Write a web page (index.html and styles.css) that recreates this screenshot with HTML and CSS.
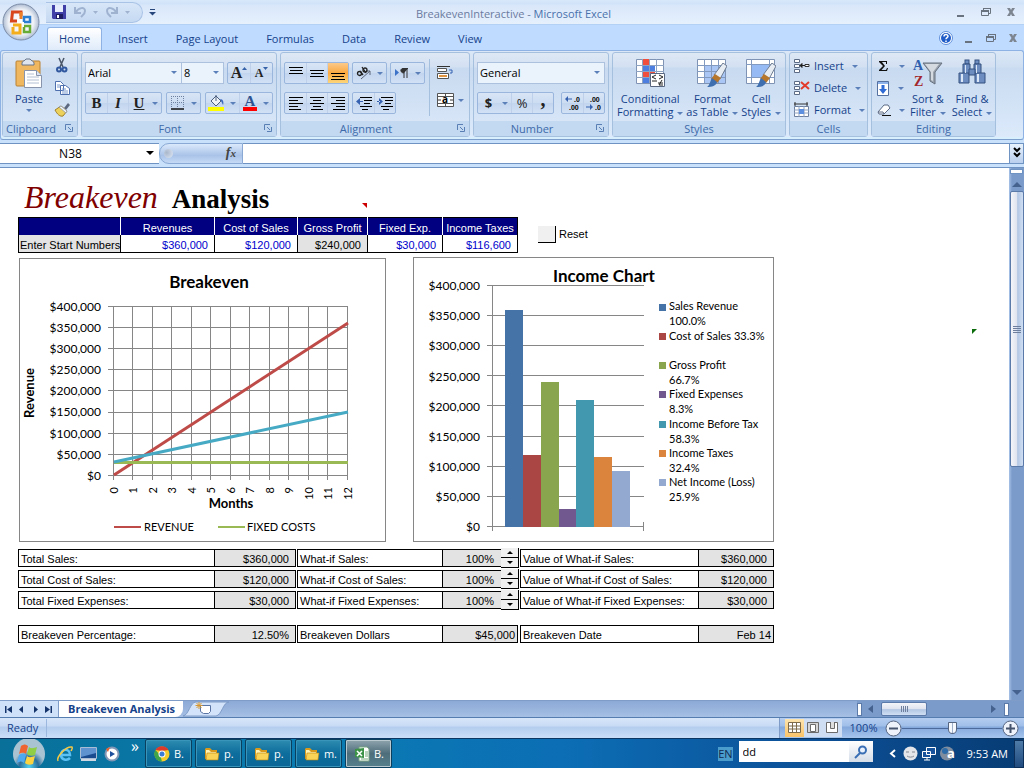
FILE: index.html
```html
<!DOCTYPE html>
<html lang="en">
<head>
<meta charset="utf-8">
<title>BreakevenInteractive - Microsoft Excel</title>
<link rel="stylesheet" href="styles.css">
</head>
<body>

<!-- shared icons -->
<svg class="defs" width="0" height="0">
	<symbol id="min" viewBox="0 0 12 12"><path d="M2 9h7v2H2z" fill="#69727f"/></symbol>
	<symbol id="restore" viewBox="0 0 12 12"><path d="M3.500 4V2.500h7v5H9M1.500 4.500h7v5h-7z" fill="none" stroke="#69727f"/><path d="M1 4h8v2H1zM3 2h8v1H3z" fill="#69727f"/></symbol>
	<symbol id="close" viewBox="0 0 12 12"><path d="M2 2h3l1 2 1-2h3L7.500 6 10 10H7L6 8l-1 2H2l2.500-4z" fill="#7d8591"/></symbol>
	<symbol id="launch" viewBox="0 0 8 8"><path d="M.5 6V.5H6" fill="none" stroke="#5a7fb4"/><path d="M3 3l3 3M7.500 3v4.500H3" fill="none" stroke="#5a7fb4"/></symbol>
	<symbol id="folder" viewBox="0 0 16 16"><path d="M1 3l1-1h4l2 2h5v9H1z" fill="#d99a1c"/><path d="M2 4h3l2 2h5v6H2z" fill="#fff2b0"/><path d="M3 7h12l-1 7H2z" fill="#f9d456" stroke="#b98212" stroke-width=".6"/></symbol>
	<symbol id="brush" viewBox="0 0 20 24"><path d="M16 0l4 3-7 13-6-4z" fill="#e8edf4" stroke="#6d7b91"/><path d="M8 11l6 4-4 5-6-4z" fill="#b6762c"/><path d="M5 15l5 4c-1 4-5 5-10 5 3-2 3-6 5-9z" fill="#3f6fae"/></symbol>
	<symbol id="insrow" viewBox="0 0 17 14"><path d="M1.500.5h5v3h-5zM1.500 5.500h5v3h-5zM1.500 10.500h5v3h-5z" fill="#fff" stroke="#5b6b85"/></symbol>
</svg>

<header class="top">
	<div class="titlebar">
		<div class="quick">
			<button title="Save"><svg width="14" height="14" viewBox="0 0 14 14"><path d="M0 0h14v14H1l-1-1z" fill="#403fa8"/><path d="M3 0h8v7H3z" fill="#e6ecfb"/><path d="M4 9h7v5H4z" fill="#1d1c62"/><path d="M5 10h2v3H5z" fill="#fff"/></svg></button>
			<button title="Undo"><svg width="24" height="14" viewBox="0 0 24 14"><path d="M1 2v6h6M2 7c2-4 9-6 9-1 0 3-2 4-4 6" fill="none" stroke="#9fb3d1" stroke-width="2"/><path d="M19 6h5l-2.500 3z" fill="#9fb3d1"/></svg></button>
			<button title="Redo"><svg width="24" height="14" viewBox="0 0 24 14"><path d="M11 2v6H5M10 7C8 3 1 1 1 6c0 3 2 4 4 6" fill="none" stroke="#9fb3d1" stroke-width="2"/><path d="M19 6h5l-2.500 3z" fill="#9fb3d1"/></svg></button>
		</div>
		<button class="more" title="Customize Quick Access Toolbar"><svg width="7" height="8" viewBox="0 0 7 8"><path d="M1 1.500h5" stroke="#27477c"/><path d="M0 4h7L3.500 7.500z" fill="#27477c"/></svg></button>
		<h1><span>BreakevenInteractive -</span> Microsoft Excel</h1>
		<div class="winbtns">
			<button title="Minimize"><svg width="12" height="12"><use href="#min"/></svg></button>
			<button title="Restore"><svg width="12" height="12"><use href="#restore"/></svg></button>
			<button title="Close"><svg width="12" height="12"><use href="#close"/></svg></button>
		</div>
	</div>

	<button class="office" title="Office Button">
		<svg width="38" height="38" viewBox="0 0 38 38">
			<defs><radialGradient id="orb"><stop offset="0" stop-color="#fff"/><stop offset=".7" stop-color="#eef1f6"/><stop offset="1" stop-color="#aebdd3"/></radialGradient></defs>
			<circle cx="19" cy="19" r="18" fill="url(#orb)" stroke="#7d8da8"/>
			<g fill="none" stroke-width="3">
				<path d="M15 18H9.500l1-9H19v4" stroke="#d8441c"/>
				<path d="M19 9v7" stroke="#ef7f25"/>
				<path d="M22 19v-5h6v5h-6" stroke="#2c7ed0" stroke-width="2.500"/>
				<path d="M11 22h7v8h-7v-6" stroke="#f4ae1c"/>
				<path d="M22 23h6v6h-6v-5" stroke="#67ac35" stroke-width="2.500"/>
			</g>
		</svg>
	</button>

	<nav class="tabs">
		<a href="#" class="on">Home</a>
		<a href="#">Insert</a>
		<a href="#">Page Layout</a>
		<a href="#">Formulas</a>
		<a href="#">Data</a>
		<a href="#">Review</a>
		<a href="#">View</a>
		<div class="winbtns">
			<button title="Help"><svg width="14" height="14" viewBox="0 0 14 14"><circle cx="7" cy="7" r="6.500" fill="#fff" stroke="#5f8fdc"/><circle cx="7" cy="7" r="5" fill="#1f5cc8"/><path d="M5 5.500C5 3 9 3 9 5.300 9 6.700 7 6.600 7 8.300M7 9.500v1.500" fill="none" stroke="#fff" stroke-width="1.500"/></svg></button>
			<button title="Minimize"><svg width="12" height="12"><use href="#min"/></svg></button>
			<button title="Restore"><svg width="12" height="12"><use href="#restore"/></svg></button>
			<button title="Close"><svg width="12" height="12"><use href="#close"/></svg></button>
		</div>
	</nav>
</header>

<div class="ribbon">
	<section class="group clip">
		<div class="body">
			<button class="big paste">
				<svg width="28" height="32" viewBox="0 0 28 32"><rect x="1" y="3" width="24" height="25" rx="1" fill="#efb75f" stroke="#b98234"/><path d="M7 5c0-2 3-2 4-4h4c1 2 4 2 4 4v2H7z" fill="#dfe5ee" stroke="#67748a"/><path d="M9.500 12.500h12l5 5v12h-17z" fill="#fff" stroke="#8794ab"/><path d="M21.500 12.500v5h5" fill="#dde5f0" stroke="#8794ab"/><path d="M12 16h7M12 19h12M12 22h12M12 25h12" stroke="#b4c0d4"/></svg>
				Paste<i class="dd"></i>
			</button>
			<div class="stack">
				<button title="Cut"><svg width="12" height="15" viewBox="0 0 12 15"><path d="M3 0l4 9M8 0L4 9" stroke="#4a5568" stroke-width="1.500"/><circle cx="3" cy="11.500" r="2" fill="none" stroke="#31589f" stroke-width="2"/><circle cx="8.500" cy="11.500" r="2" fill="none" stroke="#31589f" stroke-width="2"/></svg></button>
				<button title="Copy"><svg width="15" height="14" viewBox="0 0 15 14"><path d="M.5.5h5l3 3v6h-8zM5.500 4.500h5l4 3v6h-9z" fill="#fff" stroke="#4d6fae"/><path d="M2 4h3M2 6h3M7 8h4M7 10h6M7 12h6" stroke="#7b9ad0"/></svg></button>
				<button title="Format Painter"><svg width="16" height="14" viewBox="0 0 16 14"><path d="M10 5l4-5 2 2-4 5z" fill="#5c6880"/><path d="M1 7l6-4 6 5-4 5c-3 1-6-2-8-6z" fill="#ecd25c" stroke="#a1802b"/><path d="M7 3l6 5-1 2-7-6z" fill="#f4f6fa" stroke="#828da0" stroke-width=".7"/></svg></button>
			</div>
		</div>
		<h2>Clipboard<svg width="8" height="8"><use href="#launch"/></svg></h2>
	</section>

	<section class="group font">
		<div class="body rows">
			<div class="row">
				<div class="combos">
					<span class="sel name"><select aria-label="Font"><option>Arial</option></select></span>
					<span class="sel size"><select aria-label="Font size"><option>8</option></select></span>
				</div>
				<div class="set push">
					<button class="grow serif" title="Increase Font Size">A<svg width="5" height="3"><path d="M0 3h5L2.500 0z" fill="#3561a8"/></svg></button>
					<button class="grow shrink serif" title="Decrease Font Size">A<svg width="5" height="3"><path d="M0 0h5L2.500 3z" fill="#3561a8"/></svg></button>
				</div>
			</div>
			<div class="row spread">
				<div class="set">
					<button class="serif" title="Bold"><b>B</b></button>
					<button class="serif" title="Italic"><em>I</em></button>
					<button class="serif" title="Underline"><u>U</u></button>
					<button class="arrow" title="More"><i class="dd"></i></button>
				</div>
				<div class="set">
					<button title="Borders"><svg width="14" height="14" viewBox="0 0 14 14"><path d="M.5 0v12M6.500 0v12M12.500 0v12M0 .5h13M0 6.500h13" stroke="#6c7f9f" stroke-dasharray="1 1"/><path d="M0 13h13" stroke="#111" stroke-width="1.500"/></svg></button>
					<button class="arrow" title="More"><i class="dd"></i></button>
				</div>
				<div class="set">
					<button title="Fill Color"><svg width="17" height="16" viewBox="0 0 17 16"><path d="M3 6l5-5 5 5-5 5z" fill="#eef3fa" stroke="#4d5f80"/><path d="M8 6V0" stroke="#4d5f80"/><path d="M12 4c3 0 4 3 3 6l-2-4z" fill="#3b6bc0"/><path d="M0 12h16v4H0z" fill="#ff0"/></svg></button>
					<button class="arrow" title="More"><i class="dd"></i></button>
					<button class="serif color" title="Font Color"><b>A</b></button>
					<button class="arrow" title="More"><i class="dd"></i></button>
				</div>
			</div>
		</div>
		<h2>Font<svg width="8" height="8"><use href="#launch"/></svg></h2>
	</section>

	<section class="group align">
		<div class="body">
			<div class="rows">
				<div class="row">
					<div class="set">
						<button title="Top Align"><svg width="14" height="14"><path d="M0 1.500h14M1 4.500h12M0 7.500h14" stroke="#000"/></svg></button>
						<button title="Middle Align"><svg width="14" height="14"><path d="M0 4.500h14M1 7.500h12M0 10.500h14" stroke="#000"/></svg></button>
						<button class="hot" title="Bottom Align"><svg width="14" height="14"><path d="M0 7.500h14M1 10.500h12M0 13.500h14" stroke="#000"/></svg></button>
					</div>
					<div class="set">
						<button title="Orientation"><svg width="15" height="14" viewBox="0 0 15 14"><path d="M5 13l9-8M14 9V5h-4" stroke="#5b6578" fill="none"/><g fill="none" stroke="#222" stroke-width="1.300"><circle cx="3.500" cy="7.500" r="2"/><path d="M4 5l3 4M6 1l4 6"/><circle cx="9" cy="4" r="2"/></g></svg></button>
						<button class="arrow" title="More"><i class="dd"></i></button>
					</div>
					<div class="set">
						<button title="Text Direction"><svg width="14" height="12"><path d="M0 2v7l4-3.500z" fill="#3c73c8"/><path d="M9 2v9M12 2v9M13 1.500H8c-3 0-3 4.500 1 4.500" stroke="#333" fill="#333"/></svg></button>
						<button class="arrow" title="More"><i class="dd"></i></button>
					</div>
				</div>
				<div class="row">
					<div class="set">
						<button title="Align Left"><svg width="14" height="14"><path d="M0 1.500h14M0 4.500h9M0 7.500h14M0 10.500h9M0 13.500h12" stroke="#000"/></svg></button>
						<button title="Center"><svg width="14" height="14"><path d="M0 1.500h14M3 4.500h8M0 7.500h14M3 10.500h8M1 13.500h12" stroke="#000"/></svg></button>
						<button title="Align Right"><svg width="14" height="14"><path d="M0 1.500h14M5 4.500h9M0 7.500h14M5 10.500h9M2 13.500h12" stroke="#000"/></svg></button>
					</div>
					<div class="set">
						<button title="Decrease Indent"><svg width="16" height="14"><path d="M4 1.500h12M8 4.500h8M8 7.500h6M4 10.500h12M6 13.500h6" stroke="#000"/><path d="M0 5.500L4 2v7zM4 5h3v1H4z" fill="#3561b0"/></svg></button>
						<button title="Increase Indent"><svg width="16" height="14"><path d="M4 1.500h12M8 4.500h8M8 7.500h6M4 10.500h12M6 13.500h6" stroke="#000"/><path d="M6 5.500L2 2v7zM0 5h3v1H0z" fill="#3561b0"/></svg></button>
					</div>
				</div>
			</div>
			<div class="wraps">
				<button title="Wrap Text"><svg width="17" height="15"><path d="M0 1.500h13" stroke="#333"/><path d="M.5 3.500h9v3h-9zM.5 8.500h11v5H.5z" fill="#fff" stroke="#555"/><path d="M2 11h8" stroke="#e09440" stroke-width="2"/><path d="M12 5h3v3h-2" fill="none" stroke="#3561b0"/></svg></button>
				<button title="Merge and Center"><svg width="17" height="14"><path d="M.5.5h16v13H.5zM0 3.500h17M0 10.500h17M8.500 0v3M8.500 11v3" fill="#fff" stroke="#555"/><text x="5" y="10" font-size="10" font-weight="bold">a</text><path d="M1 7h3M13 7h3" stroke="#333"/></svg><i class="dd"></i></button>
			</div>
		</div>
		<h2>Alignment<svg width="8" height="8"><use href="#launch"/></svg></h2>
	</section>

	<section class="group number">
		<div class="body rows">
			<div class="row"><span class="sel fmt"><select aria-label="Number format"><option>General</option></select></span></div>
			<div class="row spread">
				<div class="set">
					<button class="bold" title="Accounting Format">$</button>
					<button class="arrow" title="More"><i class="dd"></i></button>
					<button class="percent" title="Percent Style">%</button>
					<button class="bold comma" title="Comma Style">,</button>
				</div>
				<div class="set">
					<button title="Increase Decimal"><svg width="16" height="18" class="dec"><text x="9" y="8">.0</text><text x="4" y="16">.00</text><path d="M0 5l3-3v6zM3 4.500h4v1H3z" fill="#3561b0"/></svg></button>
					<button title="Decrease Decimal"><svg width="16" height="18" class="dec"><text x="4" y="8">.00</text><text x="9" y="16">.0</text><path d="M7 13l-3-3v6zM0 12.500h4v1H0z" fill="#3561b0"/></svg></button>
				</div>
			</div>
		</div>
		<h2>Number<svg width="8" height="8"><use href="#launch"/></svg></h2>
	</section>

	<section class="group styles">
		<div class="body">
			<button class="big"><svg width="30" height="30" viewBox="0 0 30 30"><path d="M1.500 1.500h27v24h-27z" fill="#fff" stroke="#7f93b4"/><path d="M8 1h6v6H8zM8 13h12v6H8z" fill="#f04f3e"/><path d="M8 7h12v6H8zM8 19h6v6H8z" fill="#4c7fe0"/><path d="M7.500 1v24M14.500 1v24M21.500 1v24M1 7.500h28M1 13.500h28M1 19.500h28" stroke="#8ea2c2" fill="none"/><path d="M15.500 15.500h14v13h-14z" fill="#fff" stroke="#58677f"/><path d="M21 17l-4 2 4 2M17 23h5M24 17l4 2-4 2M23 25h5M24 27h4M27 22l-3 5" stroke="#222" fill="none"/></svg><span>Conditional<br>Formatting<i class="dd"></i></span></button>
			<button class="big"><svg width="32" height="30" viewBox="0 0 32 30"><path d="M1.500 1.500h28v24h-28z" fill="#fff" stroke="#7f93b4"/><path d="M8 7h21v18H8z" fill="#a9c6f4"/><path d="M8.500 1v24M15.500 1v24M22.500 1v24M1 7.500h28M1 13.500h28M1 19.500h28" stroke="#8299c0"/><use href="#brush" x="11" y="5" width="20" height="24"/></svg><span>Format<br>as Table<i class="dd"></i></span></button>
			<button class="big"><svg width="32" height="30" viewBox="0 0 32 30"><path d="M1.500 1.500h28v24h-28z" fill="#fff" stroke="#7f93b4"/><path d="M6.500 1v24M24.500 1v24M1 6.500h28M1 19.500h28" stroke="#8299c0"/><path d="M7 7h17v12H7z" fill="#96bbf4"/><use href="#brush" x="11" y="5" width="20" height="24"/></svg><span>Cell<br>Styles<i class="dd"></i></span></button>
		</div>
		<h2>Styles</h2>
	</section>

	<section class="group cells">
		<div class="body list">
			<button><svg width="17" height="14" viewBox="0 0 17 14"><use href="#insrow"/><path d="M12 5.500h4v2h-4z" fill="#fff" stroke="#333"/><path d="M7 6.500h5M7 6.500l2-2v4z" stroke="#222"/></svg>Insert<i class="dd"></i></button>
			<button><svg width="17" height="14" viewBox="0 0 17 14"><use href="#insrow"/><path d="M8 1l8 7M16 1L8 8" stroke="#e23a2a" stroke-width="2"/></svg>Delete<i class="dd"></i></button>
			<button><svg width="17" height="16" viewBox="0 0 17 16"><path d="M1.500 4.500h14v10h-14z" fill="#fff" stroke="#6d7f9e"/><path d="M1 8h15M1 11h15M6 4v11M11 4v11" stroke="#8fa1bf"/><path d="M6 7h5v5H6z" fill="#5d8fe0"/><path d="M1 2h14M2 0v4M14 0v4" stroke="#333" fill="none"/></svg>Format<i class="dd"></i></button>
		</div>
		<h2>Cells</h2>
	</section>

	<section class="group editing">
		<div class="body">
			<div class="list small">
				<button title="Sum"><svg width="14" height="12" viewBox="0 0 14 12"><path d="M2 1h8v3H9V2H5l3 4-3.500 4H9l1-2h1l-1 3H2v-1l4-4-4-4z" fill="#111"/></svg><i class="dd"></i></button>
				<button title="Fill"><svg width="12" height="15" viewBox="0 0 12 15"><path d="M.5.5h11v14H.5z" fill="#fff" stroke="#54719f"/><path d="M1 1h10v2H1z" fill="#8eb3ea"/><path d="M4.500 4h3v4H10l-4 5-4-5h2.500z" fill="#2e6bd4"/></svg><i class="dd"></i></button>
				<button title="Clear"><svg width="14" height="12" viewBox="0 0 14 12"><path d="M1 8l6-7h4l2 3-6 6H2z" fill="#fff" stroke="#5d6b84"/><path d="M1 8l5 0 1 2 6-6" fill="none" stroke="#5d6b84"/><path d="M5 11.500h9" stroke="#111"/></svg><i class="dd"></i></button>
			</div>
			<button class="big"><svg width="30" height="30" viewBox="0 0 30 30"><path d="M10 5h19l-7 9v12l-5-3V14z" fill="#9aa3ae" stroke="#66707e"/><path d="M12 6h14l-6 8v9l-2-1v-8z" fill="#d5dae1"/><text x="0" y="12" class="az" fill="#2f5fae">A</text><text x="1" y="28" class="az" fill="#a3282d">Z</text></svg><span>Sort &amp;<br>Filter<i class="dd"></i></span></button>
			<button class="big"><svg width="28" height="30" viewBox="0 0 28 30"><g fill="#6d8cc0" stroke="#34507f"><rect x="7" y="2" width="4" height="4"/><rect x="17" y="2" width="4" height="4"/><path d="M5 6h7v10H5zM16 6h7v10h-7z"/><path d="M1 15h10v10H1zM17 15h10v10H17z"/><path d="M11 11h6v6h-6z"/></g><path d="M3 16h2v8H3zM19 16h2v8h-2zM7 7h1v8H7zM18 7h1v8h-1z" fill="#dbe6f7"/></svg><span>Find &amp;<br>Select<i class="dd"></i></span></button>
		</div>
		<h2>Editing</h2>
	</section>
</div>

<div class="formula">
	<input class="namebox" value="N38" aria-label="Name box"><i class="drop"></i>
	<div class="fx"><span class="knob"></span><em>f<small>x</small></em></div>
	<input class="entry" aria-label="Formula bar">
	<button class="expand" title="Expand Formula Bar"><svg width="8" height="10"><path d="M1 0l3 3 3-3M1 5l3 3 3-3" fill="none" stroke="#000" stroke-width="2"/></svg></button>
</div>

<main>
	<div class="sheet">
		<h3><em>Breakeven</em> <b>Analysis</b><i class="note"></i></h3>
		<div class="startrow">
			<table class="start">
				<tr><th class="w1"></th><th class="w2">Revenues</th><th class="w3">Cost of Sales</th><th class="w4">Gross Profit</th><th class="w5">Fixed Exp.</th><th class="w6">Income Taxes</th></tr>
				<tr><td class="lbl">Enter Start Numbers</td><td>$360,000</td><td>$120,000</td><td class="calc">$240,000</td><td>$30,000</td><td>$116,600</td></tr>
			</table>
			<div class="reset"><button id="reset"></button><label for="reset">Reset</label></div>
		</div>

		<div class="charts">
			<svg class="chart" width="367" height="284" viewBox="0 0 367 284">
				<rect x=".5" y=".5" width="366" height="283" fill="#fff" stroke="#868686"/>
				<text class="ctitle" x="190" y="30">Breakeven</text>
				<path class="grid" d="M89 48.500h240M89 69.500h240M89 90.500h240M89 111.500h240M89 132.500h240M89 154.500h240M89 175.500h240M89 196.500h240M89 217.500h240"/>
				<path class="grid" d="M94.500 48v174M113.500 48v174M133.500 48v174M152.500 48v174M172.500 48v174M191.500 48v174M211.500 48v174M230.500 48v174M250.500 48v174M269.500 48v174M289.500 48v174M308.500 48v174M328.500 48v174"/>
				<g class="series"><path d="M95 217L329 65" stroke="#be4b48"/><path d="M95 204.500h234" stroke="#98b954"/><path d="M95 204L329 154" stroke="#46aac5"/></g>
				<g class="ylab">
					<text x="82" y="53">$400,000</text><text x="82" y="74">$350,000</text><text x="82" y="95">$300,000</text>
					<text x="82" y="116">$250,000</text><text x="82" y="137">$200,000</text><text x="82" y="158">$150,000</text>
					<text x="82" y="180">$100,000</text><text x="82" y="201">$50,000</text><text x="82" y="222">$0</text>
				</g>
				<g class="xlab" transform="rotate(-90)">
					<text x="-229" y="99">0</text><text x="-229" y="118">1</text><text x="-229" y="138">2</text><text x="-229" y="157">3</text>
					<text x="-229" y="177">4</text><text x="-229" y="196">5</text><text x="-229" y="216">6</text><text x="-229" y="235">7</text>
					<text x="-229" y="255">8</text><text x="-229" y="274">9</text><text x="-229" y="294">10</text><text x="-229" y="313">11</text><text x="-229" y="333">12</text>
				</g>
				<text class="axis" x="212" y="250">Months</text>
				<text class="axis" x="-135" y="15" transform="rotate(-90)">Revenue</text>
				<path d="M95 269h27" stroke="#be4b48" stroke-width="2"/><path d="M199 269h27" stroke="#98b954" stroke-width="2"/>
				<g class="legend"><text x="125" y="273">REVENUE</text><text x="228" y="273">FIXED COSTS</text></g>
			</svg>

			<svg class="chart" width="361" height="285" viewBox="0 0 361 285">
				<rect x=".5" y=".5" width="360" height="284" fill="#fff" stroke="#868686"/>
				<path class="grid" d="M74 28.500h157M74 58.500h157M74 88.500h157M74 118.500h157M74 148.500h157M74 179.500h157M74 209.500h157M74 239.500h157M74 269.500h157M79.500 28v246M230.500 265v9"/>
				<text class="ctitle" x="191" y="25">Income Chart</text>
				<g>
					<path d="M92 53h18v217H92z" fill="#4572a7"/>
					<path d="M110 198h18v72h-18z" fill="#aa4643"/>
					<path d="M128 125h18v145h-18z" fill="#89a54e"/>
					<path d="M146 252h17v18h-17z" fill="#71588f"/>
					<path d="M163 143h18v127h-18z" fill="#4198af"/>
					<path d="M181 200h18v70h-18z" fill="#db843d"/>
					<path d="M199 214h18v56h-18z" fill="#93a9cf"/>
				</g>
				<g class="ylab">
					<text x="67" y="33">$400,000</text><text x="67" y="63">$350,000</text><text x="67" y="93">$300,000</text>
					<text x="67" y="124">$250,000</text><text x="67" y="154">$200,000</text><text x="67" y="184">$150,000</text>
					<text x="67" y="214">$100,000</text><text x="67" y="244">$50,000</text><text x="67" y="274">$0</text>
				</g>
				<g class="legend">
					<rect x="246" y="47" width="7" height="7" fill="#4572a7"/><text x="256" y="53">Sales Revenue</text><text x="256" y="68">100.0%</text>
					<rect x="246" y="76" width="7" height="7" fill="#aa4643"/><text x="256" y="83">Cost of Sales 33.3%</text>
					<rect x="246" y="105" width="7" height="7" fill="#89a54e"/><text x="256" y="112">Gross Profit</text><text x="256" y="127">66.7%</text>
					<rect x="246" y="134" width="7" height="7" fill="#71588f"/><text x="256" y="141">Fixed Expenses</text><text x="256" y="156">8.3%</text>
					<rect x="246" y="164" width="7" height="7" fill="#4198af"/><text x="256" y="171">Income Before Tax</text><text x="256" y="186">58.3%</text>
					<rect x="246" y="193" width="7" height="7" fill="#db843d"/><text x="256" y="200">Income Taxes</text><text x="256" y="215">32.4%</text>
					<rect x="246" y="222" width="7" height="7" fill="#93a9cf"/><text x="256" y="229">Net Income (Loss)</text><text x="256" y="244">25.9%</text>
				</g>
			</svg>
		</div>

		<table class="totals">
			<tr><td class="t1">Total Sales:</td><td class="v t2">$360,000</td><td class="gap"></td><td class="t3">What-if Sales:</td><td class="v pct t4">100%<span class="spin"><button title="Up"></button><button title="Down"></button></span></td><td class="gap2"></td><td class="t5">Value of What-if Sales:</td><td class="v t6">$360,000</td></tr>
			<tr><td>Total Cost of Sales:</td><td class="v">$120,000</td><td class="gap"></td><td>What-if Cost of Sales:</td><td class="v pct">100%<span class="spin"><button title="Up"></button><button title="Down"></button></span></td><td class="gap2"></td><td>Value of What-if Cost of Sales:</td><td class="v">$120,000</td></tr>
			<tr><td>Total Fixed Expenses:</td><td class="v">$30,000</td><td class="gap"></td><td>What-if Fixed Expenses:</td><td class="v pct">100%<span class="spin"><button title="Up"></button><button title="Down"></button></span></td><td class="gap2"></td><td>Value of What-if Fixed Expenses:</td><td class="v">$30,000</td></tr>
		</table>
		<table class="totals last">
			<tr><td class="t1">Breakeven Percentage:</td><td class="v t2">12.50%</td><td class="gap"></td><td class="t3">Breakeven Dollars</td><td class="v t4 tight">$45,000</td><td class="gap2"></td><td class="t5">Breakeven Date</td><td class="v t6 tight">Feb 14</td></tr>
		</table>
		<i class="flag"></i>
	</div>
	<div class="vscroll">
		<span class="split"></span>
		<button class="up" title="Scroll up"></button>
		<span class="thumb"></span>
		<button class="down" title="Scroll down"></button>
	</div>
</main>

<div class="sheetbar">
	<div class="sheetnav">
		<button title="First"><svg width="7" height="7"><path d="M0 0h1.500v7H0zM7 0v7L2 3.500z" fill="#16346c"/></svg></button>
		<button title="Previous"><svg width="7" height="7"><path d="M5 0v7L1 3.500z" fill="#16346c"/></svg></button>
		<button title="Next"><svg width="7" height="7"><path d="M2 0v7l4-3.500z" fill="#16346c"/></svg></button>
		<button title="Last"><svg width="7" height="7"><path d="M5.500 0H7v7H5.500zM0 0v7l5-3.500z" fill="#16346c"/></svg></button>
	</div>
	<a href="#" class="sheettab">Breakeven Analysis</a>
	<button class="newtab" title="Insert Worksheet"><svg width="46" height="14" viewBox="0 0 46 14"><path d="M0 14C6 13 7 0 13 0h33c-6 0-7 13-13 14z" fill="#d3e3f9" stroke="#7f9cc8"/><path d="M17.500 3.500h10v6l-2 2h-5l-3-2z" fill="#fff" stroke="#5a74a4"/><path d="M16 0v7M12.500 3.500h7M13.500 1l5 5M18.500 1l-5 5" stroke="#d99830"/></svg></button>
	<div class="hscroll">
		<span class="hsplit"></span>
		<button class="left" title="Scroll left"></button>
		<span class="hthumb"></span>
		<button class="right" title="Scroll right"></button>
		<span class="hsplit"></span>
	</div>
</div>

<footer class="status">
	<span class="ready">Ready</span>
	<div class="views">
		<div class="viewset">
			<button class="hot" title="Normal"><svg width="14" height="12"><path d="M.5.5h12v10H.5zM0 4h13M0 7h13M4.500 0v11M8.500 0v11" fill="#fff" stroke="#7c6a48"/></svg></button>
			<button title="Page Layout"><svg width="13" height="12"><path d="M.5.5h11v10H.5z" fill="#d5d5d5" stroke="#6b6b6b"/><path d="M3.500 2.500h5v7h-5z" fill="#fff" stroke="#6b6b6b"/></svg></button>
			<button title="Page Break Preview"><svg width="13" height="12"><path d="M.5.5h11v10H.5z" fill="#fff" stroke="#6b6b6b"/><path d="M4.500 0v6.500h4V0" fill="#ddd" stroke="#6b6b6b"/></svg></button>
		</div>
		<span class="pc">100%</span>
		<button title="Zoom Out"><svg width="17" height="17"><circle cx="8.500" cy="8.500" r="7.500" fill="#eef3fb" stroke="#566580"/><path d="M4 7.500h9v2H4z" fill="#45536c"/></svg></button>
		<input type="range" aria-label="Zoom" value="50">
		<button title="Zoom In"><svg width="17" height="17"><circle cx="8.500" cy="8.500" r="7.500" fill="#eef3fb" stroke="#566580"/><path d="M4 7.500h9v2H4zM7.500 4h2v9h-2z" fill="#45536c"/></svg></button>
	</div>
</footer>

<div class="taskbar">
	<button class="orb" title="Start"><svg width="34" height="29" viewBox="0 0 34 29"><defs><radialGradient id="st" cy=".9"><stop offset="0" stop-color="#4fd0f0"/><stop offset=".6" stop-color="#2a6f9d"/><stop offset="1" stop-color="#a9c3d2"/></radialGradient></defs><circle cx="17" cy="15" r="16" fill="url(#st)"/><path d="M9 7c3-2 5-2 7 0l-2 8c-2-2-5-1-7 0z" fill="#f0642f"/><path d="M17 8c2 2 5 1 8 0l-2 8c-3 1-6 1-8-1z" fill="#8fce45"/><path d="M7 16c2-1 5-2 7 0l-2 8c-2-2-4-2-7 0z" fill="#4fa9ee"/><path d="M15 17c2 2 5 1 8 0l-2 8c-3 1-6 1-8-1z" fill="#fbd23f"/></svg></button>
	<div class="launchers">
		<button title="Internet Explorer"><svg width="16" height="16" viewBox="0 0 16 16"><path d="M4 9h9c0-7-9-7-9 0 0 5 6 6 9 3" fill="none" stroke="#5cc2f6" stroke-width="2.500"/><path d="M1 15C-1 11 9 0 15 1c1 1 0 2-1 4" fill="none" stroke="#f4c844" stroke-width="1.500"/></svg></button>
		<button title="Show Desktop"><svg width="17" height="14" viewBox="0 0 17 14"><path d="M.5.5h16v11H.5z" fill="#1b4b8f" stroke="#a9bdd4"/><path d="M1 1h15v5L1 10z" fill="#5f93cf"/><path d="M1 12h15v2H1z" fill="#cfd8e2"/></svg></button>
		<button title="Media Player"><svg width="16" height="16" viewBox="0 0 16 16"><circle cx="8" cy="8" r="7.500" fill="#7f96b5"/><circle cx="8" cy="8" r="5.500" fill="#fff"/><path d="M2 3l4-2-2 5z" fill="#e8602c"/><path d="M6 5v6l5-3z" fill="#1d4f9c"/></svg></button>
	</div>
	<span class="chev">»</span>
	<div class="tasks">
		<button><svg width="16" height="16" viewBox="0 0 16 16"><circle cx="8" cy="8" r="7.500" fill="#f6cb2e"/><path d="M1.500 4a7.500 7.500 0 0 1 13 0L8 5z" fill="#dd3a2c"/><path d="M1.500 4L6 9l2 6.500A7.500 7.500 0 0 1 1.500 4z" fill="#3fa548"/><circle cx="8" cy="8" r="3.500" fill="#fff"/><circle cx="8" cy="8" r="2.500" fill="#3c7bd6"/></svg>B.</button>
		<button><svg width="16" height="16"><use href="#folder"/></svg>p.</button>
		<button><svg width="16" height="16"><use href="#folder"/></svg>p.</button>
		<button><svg width="16" height="16"><use href="#folder"/></svg>m.</button>
		<button class="cur"><svg width="16" height="16" viewBox="0 0 16 16"><path d="M5 1h8l2 2v12H5z" fill="#fff" stroke="#7da783"/><path d="M1 3l9-1v10l-9-1z" fill="#3c9348"/><path d="M3 5l5 5M8 5l-5 5" stroke="#fff" stroke-width="1.500"/><path d="M11 6h3M11 8h3M11 10h3M7 13h7" stroke="#73a97a"/></svg>B.</button>
	</div>
	<span class="lang">EN</span>
	<div class="search">
		<input value="dd" aria-label="Search">
		<button title="Search"><svg width="14" height="14"><circle cx="8.500" cy="5" r="3.500" fill="#e8f1fc" stroke="#3a6fb5" stroke-width="2"/><path d="M6 8l-5 5" stroke="#3a6fb5" stroke-width="2"/></svg></button>
	</div>
	<div class="tray">
		<svg width="7" height="9"><path d="M6 1L2 4.500 6 8" fill="none" stroke="#fff" stroke-width="2"/></svg>
		<svg width="15" height="15"><circle cx="7.500" cy="7.500" r="7" fill="#e3e5e8"/><path d="M3 6h3M9 6h3M4 10c2 1.500 5 1.500 7 0" fill="none" stroke="#858b93"/></svg>
		<svg width="14" height="14"><path d="M4.500.5h9v7h-9zM.5 4.500h8v6h-8z" fill="#17539d" stroke="#fff"/><path d="M2 13h6M5 10v3" stroke="#fff"/></svg>
		<svg width="16" height="15"><circle cx="7" cy="7.500" r="7" fill="#7f8d9e"/><circle cx="5" cy="5" r="3" fill="#2c6aa8"/><text x="7" y="12" font-size="13" font-weight="bold" fill="#fff">a</text></svg>
		<span class="clock">9:53 AM</span>
	</div>
	<span class="peek"></span>
</div>

</body>
</html>
```
FILE: styles.css
```css
* {
	box-sizing: border-box;
}
body {
	margin: 0;
	height: 100vh;
	display: flex;
	flex-direction: column;
	overflow: hidden;
	background: #bfdbff;
	font: 11px/14px "Open Sans", "Noto Sans", sans-serif;
	color: #15428b;
}
h1, h2, h3 {
	margin: 0;
	font-weight: normal;
}
button {
	border: 0;
	padding: 0;
	background: none;
	font: inherit;
	color: inherit;
}
input, select {
	font: inherit;
	border: 0;
	padding: 0;
	margin: 0;
}
a {
	color: inherit;
	text-decoration: none;
}
svg {
	display: block;
	flex: none;
	overflow: visible;
}
.defs {
	position: absolute;
}

/* title bar and tabs */
.top {
	position: relative;
}
.titlebar {
	height: 25px;
	display: flex;
	align-items: center;
	padding-left: 46px;
	background: linear-gradient(#d9e8fb 0, #d0e2f9 4px, #d9e7fa 5px, #e6f0fd 100%);
	border-bottom: 1px solid #b3d1f5;
}
.quick {
	display: flex;
	gap: 8px;
	align-items: center;
	width: 97px;
	height: 21px;
	padding-left: 6px;
	border: 1px solid #a9c3e6;
	border-left: 0;
	border-radius: 0 11px 11px 0;
	background: linear-gradient(#d8e6f8, #c5d9f2);
}
.more {
	margin-left: 6px;
}
h1 {
	flex: 1;
	padding: 4px 24px 0 0;
	text-align: center;
	font-size: 11px;
	color: #4a71ab;
}
h1 span {
	color: #6b7ba0;
}
.winbtns {
	display: flex;
	gap: 13px;
	margin-left: auto;
	padding-right: 7px;
}
.titlebar .winbtns {
	margin-left: 60px;
}
.tabs .winbtns {
	gap: 10px;
	padding-right: 5px;
	align-self: center;
}
.office {
	position: absolute;
	left: 2px;
	top: 3px;
}
.tabs {
	display: flex;
	align-items: flex-end;
	height: 25px;
	padding-left: 47px;
	background: #bfdbff;
}
.tabs a {
	height: 23px;
	padding: 5px 14px 0;
}
.tabs a.on {
	padding: 4px 11px 0;
	margin-right: 2px;
	border: 1px solid #8db2e3;
	border-bottom: 0;
	border-radius: 3px 3px 0 0;
	background: linear-gradient(#fff, #dfebfa);
}

/* ribbon */
.ribbon {
	display: flex;
	gap: 3px;
	height: 90px;
	padding: 1px;
	border: 1px solid #8db2e3;
	border-bottom-color: #7d9fce;
	border-radius: 3px;
	background: linear-gradient(#dbe7f6 0, #cfdff2 16px, #c9dbf1 17px, #dceafb 100%);
	box-shadow: inset 0 -2px #d8f0fd;
}
.group {
	height: 85px;
	display: flex;
	flex-direction: column;
	border: 1px solid #a5bfdf;
	border-radius: 3px;
	background: linear-gradient(#dee8f5 0, #d3e0f2 14px, #c8daf0 15px, #dbe8f9 100%);
}
.group h2 {
	position: relative;
	height: 15px;
	font-size: 11px;
	line-height: 15px;
	text-align: center;
	color: #3e6aaa;
	background: #c2d9f1;
}
.group h2 svg {
	position: absolute;
	right: 4px;
	top: 3px;
}
.clip { width: 76px; }
.font { width: 196px; }
.align { width: 190px; }
.number { width: 136px; }
.styles { width: 174px; }
.cells { width: 79px; }
.editing { width: 125px; }
.clip h2, .font h2, .number h2, .align h2 {
	padding-right: 18px;
}
.body {
	flex: 1;
	display: flex;
	padding: 3px 3px 0;
}
.rows {
	display: flex;
	flex-direction: column;
	gap: 8px;
	padding-top: 9px;
}
.align .body {
	padding-top: 0;
}
.row {
	display: flex;
	gap: 3px;
	height: 22px;
}
.spread {
	justify-content: space-between;
}
.push {
	margin-left: auto;
}
.dd {
	display: inline-block;
	flex: none;
	border: 3px solid transparent;
	border-top-color: #5b7fb8;
	border-bottom: 0;
	margin-left: 4px;
	vertical-align: middle;
}
.big {
	display: flex;
	flex-direction: column;
	align-items: center;
	line-height: 13px;
	gap: 4px;
	padding-top: 2px;
	white-space: nowrap;
}
.paste {
	width: 46px;
	gap: 2px;
}
.paste .dd {
	margin: 2px 0 0;
}
.stack {
	display: flex;
	flex-direction: column;
	align-items: center;
	gap: 8px;
	padding: 2px 0 0 2px;
}
.combos {
	display: flex;
}
.sel {
	position: relative;
	height: 22px;
	border: 1px solid #abc1de;
	background: #eaf2fb;
}
.sel::after {
	content: "";
	position: absolute;
	right: 4px;
	top: 8px;
	border: 3px solid transparent;
	border-top-color: #5b7fb8;
	border-bottom: 0;
}
.sel select {
	appearance: none;
	width: 100%;
	height: 20px;
	padding-left: 2px;
	background: none;
	color: #000;
}
.name { width: 97px; }
.size { width: 43px; margin-left: -1px; }
.fmt { width: 100%; }
.set {
	display: flex;
	border: 1px solid #9ab6dc;
	border-radius: 2px;
	height: 22px;
	background: linear-gradient(#d8e5f6 0, #ccdcf1 50%, #c2d5ee 51%, #d2e1f5 100%);
}
.set button {
	display: flex;
	align-items: center;
	justify-content: center;
	width: 21px;
	color: #222;
	border-left: 1px solid #bfd1ea;
}
.set button:first-child {
	border-left: 0;
}
.set button.arrow {
	width: 12px;
	border-left: 0;
}
.set .dd {
	margin: 0;
}
.serif {
	font-family: "Liberation Serif", serif;
	font-size: 15px;
	font-weight: bold;
}
.set .grow {
	width: 22px;
	font-size: 16px;
}
.grow svg {
	align-self: flex-start;
	margin-top: 4px;
}
.set .shrink {
	font-size: 12px;
}
.color b {
	line-height: 12px;
	padding: 0 2px;
	border-bottom: 4px solid #f00;
	color: #2d5491;
}
.bold {
	font-weight: bold;
	font-size: 13px;
}
.percent {
	font-size: 13px;
}
.set .comma {
	font-family: "Liberation Serif", serif;
	font-size: 20px;
	padding-bottom: 8px;
}
.dec text {
	font: bold 7px "Liberation Sans", sans-serif;
}
.set .hot {
	background: linear-gradient(#fbc98a, #fba93e 50%, #fdd67a);
}
.wraps {
	display: flex;
	flex-direction: column;
	gap: 13px;
	margin: 6px 0 5px 4px;
	padding: 6px 0 0 7px;
	border-left: 1px solid #a5bfdf;
}
.wraps button {
	display: flex;
	align-items: center;
}
.styles .body {
	justify-content: space-between;
	padding: 3px 4px 0;
}
.list {
	display: flex;
	flex-direction: column;
	gap: 2px;
}
.list button {
	display: flex;
	align-items: center;
	gap: 4px;
	height: 20px;
}
.small {
	width: 32px;
	padding-left: 2px;
}
.small button {
	justify-content: space-between;
	width: 27px;
}
.editing .body {
	gap: 6px;
}
.az {
	font: bold 14px "Liberation Serif", serif;
}

/* formula bar */
.formula {
	display: flex;
	align-items: center;
	height: 28px;
	padding: 3px 0 4px;
	background: #c9e1fb;
	border-bottom: 1px solid #6f93c3;
}
.formula > * {
	height: 21px;
	border-top: 1px solid #6f93c3;
	border-bottom: 1px solid #6f93c3;
}
.namebox {
	width: 141px;
	text-align: center;
	font-size: 12px;
	color: #000;
	background: #fff;
}
.drop {
	display: flex;
	align-items: center;
	justify-content: center;
	width: 18px;
	background: #fff;
}
.drop::after {
	content: "";
	border: 4px solid transparent;
	border-top-color: #000;
	border-bottom: 0;
}
.fx {
	display: flex;
	justify-content: space-between;
	align-items: center;
	width: 84px;
	padding: 0 6px 0 4px;
	border: 1px solid #8aa9d4;
	border-radius: 10px 0 0 10px;
	background: linear-gradient(#dbe9fb, #a9c3e8 60%, #c5daf5);
}
.fx em {
	font: italic bold 14px "Liberation Serif", serif;
	color: #444;
}
.fx small {
	font-size: 11px;
}
.knob {
	width: 9px;
	height: 9px;
	border-radius: 50%;
	background: radial-gradient(circle at 30% 40%, #a9b7cc, #dfe8f5);
}
.entry {
	flex: 1;
	background: #fff;
	color: #000;
}
.formula .expand {
	display: flex;
	align-items: center;
	justify-content: center;
	width: 15px;
	border: 1px solid #6f93c3;
	background: linear-gradient(#e8f2fd, #b9cfee);
}

/* worksheet */
main {
	flex: 1;
	display: flex;
	min-height: 0;
}
.sheet {
	position: relative;
	flex: 1;
	padding: 10px 0 0 18px;
	background: #fff;
	color: #000;
	font-family: "Liberation Sans", Arial, sans-serif;
}
h3 {
	display: flex;
	align-items: baseline;
	height: 39px;
	padding-left: 6px;
	font-family: "Liberation Serif", "Times New Roman", serif;
	line-height: 38px;
}
h3 em {
	font-size: 32px;
	color: #800000;
	margin-right: 14px;
}
h3 b {
	font-size: 27px;
}
.note {
	margin-left: 93px;
	border-top: 5px solid #c00;
	border-left: 5px solid transparent;
}
table {
	border-collapse: collapse;
	table-layout: fixed;
}
td, th {
	padding: 0 2px;
	line-height: 14px;
	font-weight: normal;
	white-space: nowrap;
}
.startrow {
	display: flex;
	gap: 20px;
}
.start {
	width: 500px;
	border: 1px solid #000;
}
.start th {
	height: 17px;
	padding: 3px 0 0;
	color: #fff;
	background: #000080;
	border-left: 1px solid #fff;
}
.start th:first-child {
	border-left-color: #000;
}
.start td {
	height: 17px;
	padding: 3px 6px 0 0;
	border-left: 1px solid #000;
	text-align: right;
	color: #00c;
}
.start .lbl, .start .calc {
	color: #000;
	background: #e3e3e3;
}
.start .lbl {
	text-align: left;
	padding: 3px 0 0 1px;
}
.w1 { width: 102px; }
.w2 { width: 94px; }
.w3 { width: 83px; }
.w4 { width: 70px; }
.w5 { width: 75px; }
.w6 { width: 75px; }
.reset {
	display: flex;
	align-items: center;
	gap: 3px;
	height: 34px;
}
.reset button {
	width: 18px;
	height: 17px;
	background: #f0f0f0;
	border-right: 1px solid #000;
	border-bottom: 1px solid #000;
}
.charts {
	display: flex;
	align-items: flex-end;
	gap: 27px;
	margin: 4px 0 0 1px;
}
.chart {
	font: 12px Lato, Carlito, sans-serif;
}
.grid {
	fill: none;
	stroke: #868686;
}
.ctitle {
	font-size: 17px;
	font-weight: bold;
	text-anchor: middle;
}
.axis {
	font-size: 13px;
	font-weight: bold;
	text-anchor: middle;
}
.ylab, .xlab {
	text-anchor: end;
}
.xlab, .legend {
	font-size: 11px;
}
.series {
	fill: none;
	stroke-width: 3;
}
.totals {
	width: 756px;
	margin-top: 4px;
	border-collapse: separate;
	border-spacing: 0 3px;
}
.totals td {
	height: 18px;
	padding-top: 2px;
	border: 1px solid #000;
	border-right: 0;
}
.totals .v {
	padding-right: 6px;
	border-right: 1px solid #000;
	background: #e3e3e3;
	text-align: right;
}
.totals .tight {
	padding-right: 2px;
}
.totals .pct {
	position: relative;
	padding-right: 23px;
}
.totals .gap, .totals .gap2 {
	padding: 0;
	border: 0;
	width: 1px;
}
.totals .gap2 {
	width: 2px;
}
.last {
	margin-top: 10px;
}
.t1 { width: 196px; }
.t2 { width: 82px; }
.t3 { width: 145px; }
.t4 { width: 76px; }
.t5 { width: 178px; }
.t6 { width: 76px; }
.spin {
	position: absolute;
	right: -2px;
	top: -2px;
	display: flex;
	flex-direction: column;
}
.spin button {
	display: flex;
	align-items: center;
	justify-content: center;
	width: 18px;
	height: 10px;
	background: #f0f0f0;
	border-right: 1px solid #000;
	border-bottom: 1px solid #000;
}
.spin button::after {
	content: "";
	border: 3px solid transparent;
	border-bottom-color: #000;
	border-top: 0;
}
.spin button + button::after {
	border-top: 3px solid #000;
	border-bottom: 0;
}
.flag {
	position: absolute;
	left: 972px;
	top: 161px;
	border-top: 5px solid #0a6b0a;
	border-right: 5px solid transparent;
}

/* scroll bars */
.vscroll {
	display: flex;
	flex-direction: column;
	align-items: center;
	width: 15px;
	background: linear-gradient(90deg, #a9c3e8, #7b9bcb 3px, #7b9bcb);
}
.split {
	width: 13px;
	height: 5px;
	margin: 1px 0 8px;
	border: 1px solid #6f93c3;
	background: #fff;
}
.up, .down {
	border: 5px solid transparent;
	border-bottom-color: #45628f;
	border-top: 0;
}
.down {
	margin: auto 0 5px;
	border-top: 5px solid #45628f;
	border-bottom: 0;
}
.thumb {
	width: 14px;
	height: 276px;
	margin-top: 4px;
	border: 1px solid #5b79a9;
	border-radius: 2px;
	background: repeating-linear-gradient(#6e7f9e 0 1px, transparent 1px 2px) center / 8px 7px no-repeat, linear-gradient(90deg, #f4f5fa, #dfe3ee 50%, #b2c6e4 55%, #d0dff3);
}
.sheetbar {
	display: flex;
	height: 17px;
	border-top: 1px solid #7f9cc8;
	background: linear-gradient(#8ca9d6, #a5bfe4);
}
.sheetnav {
	display: flex;
	align-items: center;
	justify-content: space-between;
	width: 59px;
	padding: 0 6px 0 5px;
	border-right: 1px solid #7f9cc8;
	background: #cfe1f8;
}
.sheettab {
	padding: 1px 8px 0 9px;
	font-weight: bold;
	background: #fff;
	border-radius: 0 0 8px 0;
}
.hscroll {
	display: flex;
	align-items: center;
	width: 167px;
	margin-left: auto;
	padding-right: 15px;
	background: #7b9bcb;
}
.hsplit {
	width: 5px;
	height: 13px;
	border: 1px solid #5b79a9;
	background: #fff;
}
.left, .right {
	border: 4px solid transparent;
	border-right: 5px solid #45628f;
	border-left: 0;
	margin: 0 8px 0 6px;
}
.right {
	border-left: 5px solid #45628f;
	border-right: 0;
	margin: 0 8px 0 auto;
}
.hthumb {
	width: 46px;
	height: 14px;
	border: 1px solid #5b79a9;
	border-radius: 2px;
	background: repeating-linear-gradient(90deg, #6e7f9e 0 1px, transparent 1px 2px) center / 7px 6px no-repeat, linear-gradient(#f4f5fa, #dfe3ee 50%, #b2c6e4 55%, #d0dff3);
}

/* status bar */
.status {
	display: flex;
	align-items: center;
	height: 21px;
	border-top: 1px solid #567db0;
	background: linear-gradient(#d8e6f9 0, #c8dbf5 8px, #b4cdee 9px, #c9def8 100%);
}
.ready {
	width: 47px;
	padding-left: 7px;
	line-height: 18px;
	border-right: 1px solid #9bb7de;
}
.views {
	display: flex;
	align-items: center;
	height: 20px;
	margin-left: auto;
	padding: 0 5px;
	border-left: 1px solid #7f9cc8;
	background: linear-gradient(#b5cdf0 0, #a0bfe9 8px, #84a8dc 9px, #a5c5ee 100%);
}
.viewset {
	display: flex;
	height: 18px;
	background: #cfdef3;
}
.viewset button {
	display: flex;
	align-items: center;
	justify-content: center;
	width: 19px;
}
.viewset .hot {
	background: linear-gradient(#fde4ae, #fbc468);
}
.pc {
	width: 43px;
	text-align: center;
}
.views input {
	appearance: none;
	width: 100px;
	height: 12px;
	background: linear-gradient(#4d6a9c, #4d6a9c) center / 100% 1px no-repeat;
}
.views input::-webkit-slider-thumb {
	appearance: none;
	width: 9px;
	height: 12px;
	border: 1px solid #566580;
	border-radius: 1px 1px 5px 5px;
	background: linear-gradient(90deg, #f6f9fd 3px, #9fb0ca 3px, #9fb0ca 4px, #f6f9fd 4px);
}

/* taskbar */
.taskbar {
	display: flex;
	align-items: center;
	height: 30px;
	padding-left: 12px;
	color: #fff;
	border-top: 1px solid #0b3562;
	background: linear-gradient(90deg, #087099 0, #0a7cb2 30%, #0c6eb5 55%, #0c4f96 80%, #073c74 100%);
}
.orb svg {
	overflow: hidden;
}
.launchers {
	display: flex;
	align-items: center;
	gap: 7px;
	margin-left: 11px;
}
.chev {
	align-self: flex-start;
	margin-left: 11px;
	font-size: 16px;
}
.tasks {
	display: flex;
	gap: 3px;
	height: 29px;
	margin-left: 6px;
}
.tasks button {
	display: flex;
	align-items: center;
	gap: 4px;
	width: 47px;
	padding-left: 8px;
	border: 1px solid #0a3f5d;
	border-radius: 2px;
	background: linear-gradient(#2e8cb0, #0d6d9c 50%, #0a6696);
	box-shadow: inset 0 0 0 1px #3a95bb;
}
.tasks .cur {
	background: linear-gradient(#8fa5ae, #4e6d7b 50%, #55808c);
	box-shadow: inset 0 0 0 1px #b9c9cf;
}
.lang {
	margin-left: auto;
	background: #4a9ccc;
	color: #10294e;
}
.search {
	display: flex;
	align-self: flex-start;
	height: 21px;
	margin: 2px 0 0 6px;
}
.search input {
	width: 110px;
	padding: 0 4px;
	background: #fff;
	color: #000;
}
.search button {
	display: flex;
	align-items: center;
	justify-content: center;
	width: 24px;
	background: linear-gradient(#fff, #d5dde8);
}
.tray {
	display: flex;
	align-items: center;
	gap: 4px;
	margin: 0 6px 0 16px;
}
.tray > svg:first-child {
	margin-right: 3px;
}
.clock {
	margin-left: 7px;
}
.peek {
	width: 10px;
	height: 28px;
	border: 1px solid #0b2f59;
	background: linear-gradient(#4f7ba8, #1f4b80);
}
```
